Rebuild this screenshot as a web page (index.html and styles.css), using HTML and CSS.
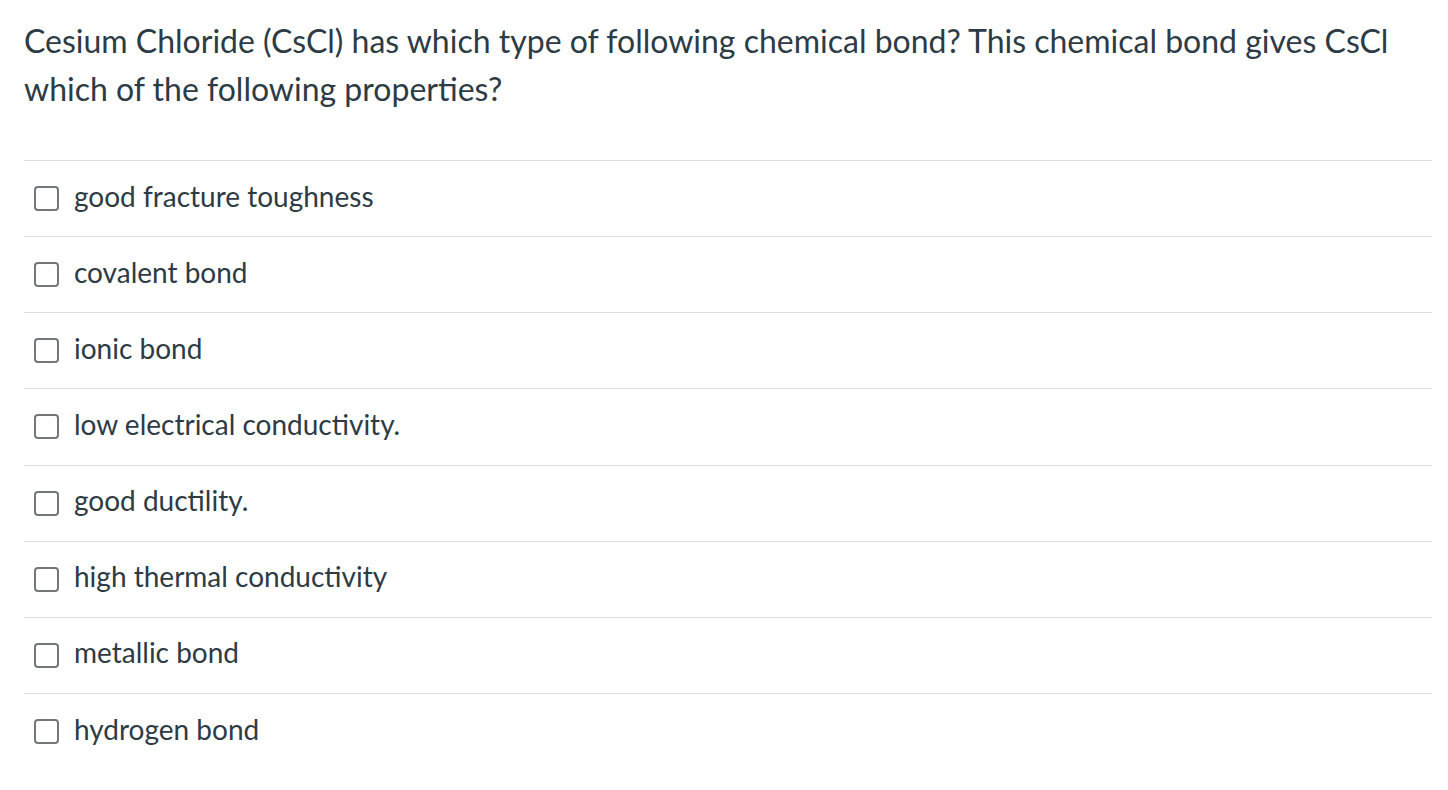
FILE: index.html
```html
<!DOCTYPE html>
<html>
<head>
<meta charset="utf-8">
<link rel="stylesheet" href="styles.css">
</head>
<body>
<div class="question">
  <p class="prompt">Cesium Chloride (CsCl) has which type of following chemical bond? This chemical bond gives CsCl which of the following properties?</p>
  <ul class="answers">
    <li class="answer"><span class="box"></span><span class="label">good fracture toughness</span></li>
    <li class="answer"><span class="box"></span><span class="label">covalent bond</span></li>
    <li class="answer"><span class="box"></span><span class="label">ionic bond</span></li>
    <li class="answer"><span class="box"></span><span class="label">low electrical conductivity.</span></li>
    <li class="answer"><span class="box"></span><span class="label">good ductility.</span></li>
    <li class="answer"><span class="box"></span><span class="label">high thermal conductivity</span></li>
    <li class="answer"><span class="box"></span><span class="label">metallic bond</span></li>
    <li class="answer"><span class="box"></span><span class="label">hydrogen bond</span></li>
  </ul>
</div>
</body>
</html>
```
FILE: styles.css
```css
html, body {
  margin: 0;
  padding: 0;
  background: #fff;
}
body {
  font-family: Lato, "Liberation Sans", sans-serif;
  color: #2d3b45;
}
.question {
  padding: 17px 16px 0 24px;
}
.prompt {
  margin: 0;
  font-size: 32px;
  line-height: 48px;
}
.answers {
  list-style: none;
  margin: 47px 0 0 0;
  padding: 0;
}
.answer {
  display: flex;
  align-items: center;
  gap: 15px;
  height: 75.15px;
  border-top: 1px solid #dcdcdc;
  padding-left: 10px;
}
.box {
  width: 21px;
  height: 21px;
  border: 2px solid #73777a;
  border-radius: 4px;
  flex: none;
}
.label {
  font-size: 28px;
  padding-bottom: 6px;
}
```
